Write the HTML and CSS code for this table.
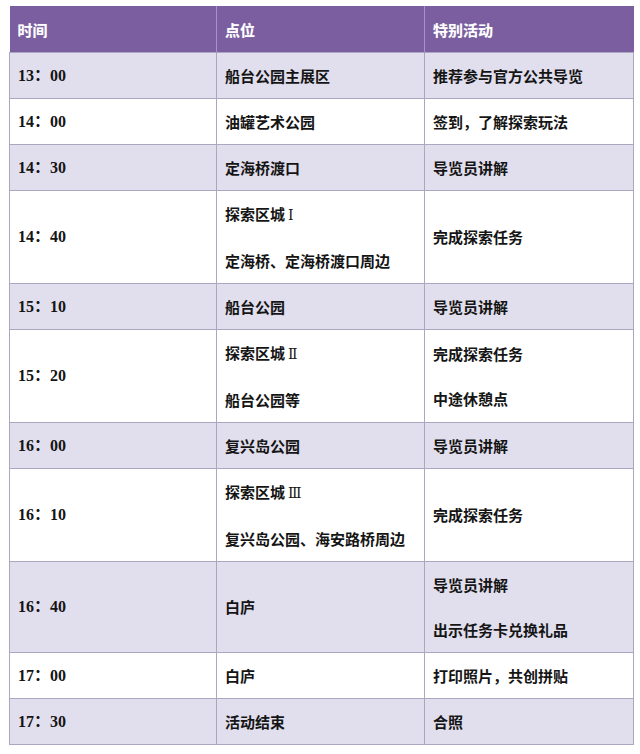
FILE: index.html
```html
<!DOCTYPE html>
<html lang="zh-CN">
<head>
<meta charset="utf-8">
<title>活动日程</title>
<link rel="stylesheet" href="styles.css">
</head>
<body>
<table class="schedule">
  <colgroup>
    <col class="c1"><col class="c2"><col class="c3">
  </colgroup>
  <thead>
    <tr><th>时间</th><th>点位</th><th>特别活动</th></tr>
  </thead>
  <tbody>
    <tr class="alt"><td class="time">13：00</td><td>船台公园主展区</td><td>推荐参与官方公共导览</td></tr>
    <tr><td class="time">14：00</td><td>油罐艺术公园</td><td>签到，了解探索玩法</td></tr>
    <tr class="alt"><td class="time">14：30</td><td>定海桥渡口</td><td>导览员讲解</td></tr>
    <tr class="dbl"><td class="time">14：40</td><td><div class="ln">探索区城<span class="rn">Ⅰ</span></div><div class="ln">定海桥、定海桥渡口周边</div></td><td>完成探索任务</td></tr>
    <tr class="alt"><td class="time">15：10</td><td>船台公园</td><td>导览员讲解</td></tr>
    <tr class="dbl"><td class="time">15：20</td><td><div class="ln">探索区城<span class="rn">Ⅱ</span></div><div class="ln">船台公园等</div></td><td><div class="ln">完成探索任务</div><div class="ln">中途休憩点</div></td></tr>
    <tr class="alt"><td class="time">16：00</td><td>复兴岛公园</td><td>导览员讲解</td></tr>
    <tr class="dbl"><td class="time">16：10</td><td><div class="ln">探索区城<span class="rn">Ⅲ</span></div><div class="ln">复兴岛公园、海安路桥周边</div></td><td>完成探索任务</td></tr>
    <tr class="alt dbl"><td class="time">16：40</td><td>白庐</td><td><div class="ln">导览员讲解</div><div class="ln">出示任务卡兑换礼品</div></td></tr>
    <tr><td class="time">17：00</td><td>白庐</td><td>打印照片，共创拼贴</td></tr>
    <tr class="alt"><td class="time">17：30</td><td>活动结束</td><td>合照</td></tr>
  </tbody>
</table>
</body>
</html>
```
FILE: styles.css
```css
html, body {
  background: #ffffff;
}
body {
  margin: 6px 0 0 9px;
  font-family: "Liberation Serif", "Noto Sans CJK SC", serif;
  color: #1a1a1a;
}
.schedule {
  border-collapse: collapse;
  table-layout: fixed;
  width: 624px;
}
.c1 { width: 207px; }
.c2 { width: 208px; }
.c3 { width: 209px; }
.schedule th {
  background: #7a5e9f;
  color: #ffffff;
  font-family: "Noto Sans CJK SC", sans-serif;
  font-weight: 700;
  font-size: 15px;
  text-align: left;
  height: 46px;
  padding: 0 8px;
  border-left: 1px solid #a890c8;
  text-shadow: 0 0 1px rgba(255,255,255,0.4);
}
.schedule th:first-child { border-left: none; }
.schedule td {
  border: 1px solid #aaa7c0;
  padding: 0 8px;
  height: 45px;
  font-family: "Noto Sans CJK SC", sans-serif;
  font-weight: 700;
  font-size: 15px;
  line-height: 20px;
  vertical-align: middle;
  color: #151515;
  white-space: nowrap;
}
.schedule tr.dbl td {
  height: 90px;
}
.schedule td.time {
  font-family: "Liberation Serif", "Noto Sans CJK SC", serif;
  font-size: 16px;
}
.schedule tr.alt td {
  background: #e1deed;
}
.ln {
  line-height: 45px;
}
.rn {
  font-family: "DejaVu Serif", "Liberation Serif", serif;
  font-weight: 400;
  font-size: 14px;
  margin-left: 3px;
}
```
